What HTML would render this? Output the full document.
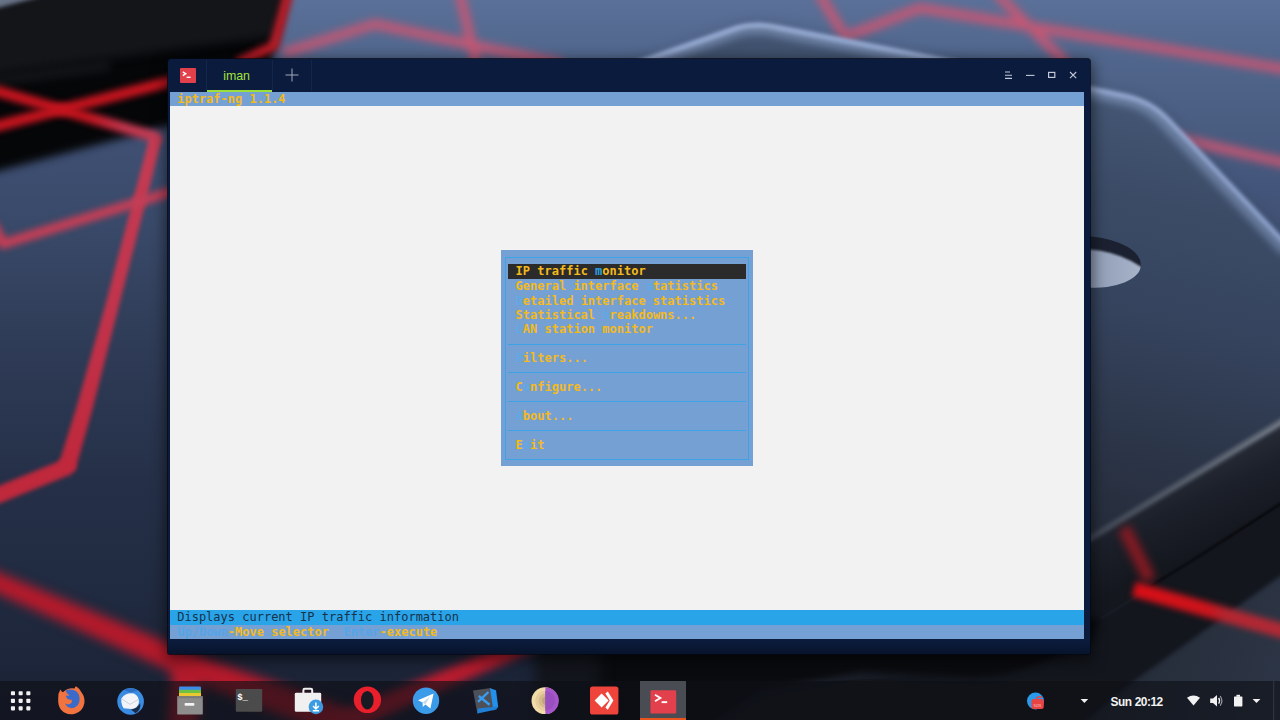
<!DOCTYPE html>
<html lang="en">
<head>
<meta charset="utf-8">
<title>iptraf-ng - Tilix</title>
<style>
*{box-sizing:border-box;margin:0;padding:0}
html,body{width:1280px;height:720px;overflow:hidden;background:#3c4a64}
body{position:relative;font-family:"Liberation Sans","DejaVu Sans",sans-serif}
#bg{position:absolute;left:0;top:0;width:1280px;height:720px;display:block}
/* ---------- window ---------- */
#win{position:absolute;left:168px;top:59px;width:922px;height:595px;background:#0a1b3d;border-radius:3px 3px 2px 2px;
 box-shadow:0 0 0 1px rgba(4,8,20,.75),0 4px 14px 3px rgba(0,0,0,.5)}
#winbot{position:absolute;left:0;right:0;bottom:0;height:15px;background:linear-gradient(#0b1c3e,#08142c);border-radius:0 0 2px 2px}
#titlebar{position:absolute;left:0;top:0;width:922px;height:33px}
.tsep{position:absolute;top:1px;width:1px;height:31px;background:#13274d}
#appicon{position:absolute;left:12px;top:9px;width:16px;height:15px;background:#e2414c;border-radius:1px}
#tab{position:absolute;left:39px;top:0;width:65px;height:33px;color:#a4e23c;font-size:12.4px;line-height:34px;text-align:center;padding-right:6px;letter-spacing:-.1px}
#tabline{position:absolute;left:39px;top:31px;width:65px;height:2px;background:#9be03a}
#term{position:absolute;left:2px;top:33px;width:914px;height:547px;background:#f2f2f2;overflow:hidden;
 font-family:"DejaVu Sans Mono","Liberation Mono",monospace;font-size:12px;font-weight:bold;line-height:14.4px;color:#f4ba1c}
.row{position:absolute;left:0;width:914px;height:14.4px;white-space:pre}
.k{color:#62a8e4}
#menu{position:absolute;left:331.2px;top:158.4px;width:252px;height:216px;background:#74a0d4}
#menu:before{content:"";position:absolute;left:3.6px;top:6.6px;right:4px;bottom:6.6px;border:1px solid #3ea2e6}
.mi{left:345.6px;width:230px}
.sep{position:absolute;left:338px;width:238px;height:1px;background:#3ea2e6}
.k2{color:#2e9fe4}
.k3{color:#55a5e8}
/* ---------- taskbar ---------- */
#dock{position:absolute;left:0;top:681px;width:1280px;height:39px;background:rgba(14,16,22,.63)}
.ico{position:absolute;top:4px;width:32px;height:32px}
#active{position:absolute;left:640px;top:0;width:46px;height:39px;background:#4a4c53;border-bottom:2px solid #e9541e}
#clock{position:absolute;left:1110.5px;top:1.5px;height:39px;line-height:39px;color:#f2f2f2;font-weight:bold;font-size:11.9px;letter-spacing:-.52px;word-spacing:.6px}
</style>
</head>
<body>
<svg id="bg" viewBox="0 0 1280 720" width="1280" height="720">
<!--BG-->
<defs>
  <linearGradient id="gTable" x1="0" y1="0" x2="0" y2="1">
    <stop offset="0" stop-color="#5a7098"/>
    <stop offset="0.08" stop-color="#51668c"/>
    <stop offset="0.167" stop-color="#4a5e82"/>
    <stop offset="0.264" stop-color="#43557a"/>
    <stop offset="0.42" stop-color="#394864"/>
    <stop offset="0.75" stop-color="#2a3448"/>
    <stop offset="1" stop-color="#1e2430"/>
  </linearGradient>
  <linearGradient id="gLeft" gradientUnits="userSpaceOnUse" x1="0" y1="150" x2="0" y2="700">
    <stop offset="0" stop-color="#3e4f72"/>
    <stop offset="0.12" stop-color="#3a4a6a"/>
    <stop offset="0.35" stop-color="#2f3c57"/>
    <stop offset="0.6" stop-color="#253048"/>
    <stop offset="0.8" stop-color="#202a40"/>
    <stop offset="1" stop-color="#1b2336"/>
  </linearGradient>
  <linearGradient id="gSlab" gradientUnits="userSpaceOnUse" x1="1180" y1="26" x2="1060" y2="540">
    <stop offset="0" stop-color="#566a90"/>
    <stop offset="0.12" stop-color="#455876"/>
    <stop offset="0.34" stop-color="#3b4b66"/>
    <stop offset="0.55" stop-color="#35435d"/>
    <stop offset="0.78" stop-color="#2c3649"/>
    <stop offset="1" stop-color="#252b38"/>
  </linearGradient>
  <linearGradient id="gSide" gradientUnits="userSpaceOnUse" x1="1180" y1="470" x2="1215" y2="545">
    <stop offset="0" stop-color="#272c37"/>
    <stop offset="0.4" stop-color="#1c202a"/>
    <stop offset="1" stop-color="#14171e"/>
  </linearGradient>
  <linearGradient id="gFloor" gradientUnits="userSpaceOnUse" x1="1040" y1="650" x2="1280" y2="720">
    <stop offset="0" stop-color="#171a22"/>
    <stop offset="0.35" stop-color="#252c39"/>
    <stop offset="1" stop-color="#2d3646"/>
  </linearGradient>
  <linearGradient id="gRim2" gradientUnits="userSpaceOnUse" x1="1090" y1="0" x2="1280" y2="0">
    <stop offset="0" stop-color="#424a57"/>
    <stop offset="1" stop-color="#7a8290"/>
  </linearGradient>
  <linearGradient id="gRedF" gradientUnits="userSpaceOnUse" x1="1136" y1="0" x2="1280" y2="0">
    <stop offset="0" stop-color="#d80e16"/>
    <stop offset="0.5" stop-color="#cc141c"/>
    <stop offset="0.62" stop-color="#b42630"/>
    <stop offset="1" stop-color="#ae2a36"/>
  </linearGradient>
  <linearGradient id="gHole" x1="0" y1="0" x2="1" y2="0">
    <stop offset="0" stop-color="#7d8aa3"/>
    <stop offset="0.5" stop-color="#8f9cb5"/>
    <stop offset="1" stop-color="#a9b5ca"/>
  </linearGradient>
  <clipPath id="cHole"><ellipse cx="1089" cy="262" rx="52" ry="25.5" transform="rotate(4 1089 262)"/></clipPath>
  <filter id="b1" filterUnits="userSpaceOnUse" x="-60" y="-60" width="1400" height="840" color-interpolation-filters="sRGB"><feGaussianBlur stdDeviation="1.2"/></filter>
  <filter id="b2" filterUnits="userSpaceOnUse" x="-60" y="-60" width="1400" height="840" color-interpolation-filters="sRGB"><feGaussianBlur stdDeviation="2.2"/></filter>
  <filter id="b3" filterUnits="userSpaceOnUse" x="-60" y="-60" width="1400" height="840" color-interpolation-filters="sRGB"><feGaussianBlur stdDeviation="3"/></filter>
  <filter id="b4" filterUnits="userSpaceOnUse" x="-60" y="-60" width="1400" height="840" color-interpolation-filters="sRGB"><feGaussianBlur stdDeviation="4"/></filter>
  <filter id="b6" filterUnits="userSpaceOnUse" x="-60" y="-60" width="1400" height="840" color-interpolation-filters="sRGB"><feGaussianBlur stdDeviation="5.5"/></filter>
  <filter id="b7" filterUnits="userSpaceOnUse" x="-60" y="-60" width="1400" height="840" color-interpolation-filters="sRGB"><feGaussianBlur stdDeviation="7"/></filter>
  <filter id="b12" filterUnits="userSpaceOnUse" x="-60" y="-60" width="1400" height="840" color-interpolation-filters="sRGB"><feGaussianBlur stdDeviation="12"/></filter>
  <linearGradient id="gL1" gradientUnits="userSpaceOnUse" x1="0" y1="0" x2="160" y2="0">
    <stop offset="0" stop-color="#c4141e"/><stop offset="0.55" stop-color="#c4141e"/><stop offset="0.78" stop-color="#c43850"/><stop offset="1" stop-color="#c43c54"/>
  </linearGradient>
  <linearGradient id="gL3" gradientUnits="userSpaceOnUse" x1="0" y1="137" x2="0" y2="467">
    <stop offset="0" stop-color="#c43c54"/><stop offset="0.5" stop-color="#c2344c"/><stop offset="1" stop-color="#c0283c"/>
  </linearGradient>
  <linearGradient id="gRim1" gradientUnits="userSpaceOnUse" x1="0" y1="25" x2="0" y2="250">
    <stop offset="0" stop-color="#b6caf4"/><stop offset="0.4" stop-color="#a8bce8"/><stop offset="1" stop-color="#a0b6e4"/>
  </linearGradient>
</defs>
<rect width="1280" height="720" fill="url(#gTable)"/>
<!-- red lines on the table (top) -->
<g fill="none" stroke="#cc5672" stroke-width="9.5" stroke-linecap="round" stroke-linejoin="round" filter="url(#b4)" opacity=".92">
  <path d="M287 52 L375 24 L560 64"/>
  <path d="M460 -5 L476 62"/>
  <path d="M820 -5 L845 37 L920 8 L1290 70"/>
  <path d="M998 -5 L1065 62"/>
  <path d="M1150 132 L1290 164"/>
</g>
<path d="M480 600 L1290 450 L1290 730 L480 730 Z" fill="url(#gFloor)"/>
<!-- big slab : shadow + top face + rim -->
<path d="M560 92 L650 58 L738 27 Q756 22 778 27 L935 58 L1090 88 L1128 96 Q1150 101 1166 117 L1290 248 L1290 416 L1090 537 L700 700 L400 600 Z" fill="#2c3850" opacity=".55" filter="url(#b7)"/>
<path d="M560 92 L650 58 L738 27 Q756 22 778 27 L935 58 L1090 88 L1128 96 Q1150 101 1166 117 L1290 248 L1290 416 L1090 537 L700 700 L400 600 Z" fill="url(#gSlab)"/>
<path d="M630 66 L738 28 Q756 23 778 28 L935 59 L1090 89 L1128 97 Q1150 102 1166 118 L1290 249" fill="none" stroke="url(#gRim1)" stroke-width="4" filter="url(#b2)"/>
<path d="M630 70 L738 32 Q756 27 778 32 L935 63 L1090 93 L1128 101 Q1148 106 1162 121 L1286 252" fill="none" stroke="#8fa4cc" stroke-width="8" filter="url(#b4)" opacity=".7"/>
<!-- floor, slab side, shadow band -->
<path d="M1290 498 L1197 558 L1100 618 L480 640 L480 740 L1062 740 L1134 681 L1290 569 Z" fill="#13161d" filter="url(#b2)"/>
<path d="M1290 414 L1090 537 L700 645 L480 640 L480 700 L1000 672 L1100 618 L1290 500 Z" fill="url(#gSide)"/>
<path d="M540 636 L1100 618 L1092 641 L1043 662 Q1000 680 958 676 L860 672 L760 690 L700 730 L540 730 Z" fill="#0a0b0f" filter="url(#b3)"/>
<path d="M1290 498 L1197 558 L1150 587" fill="none" stroke="#050608" stroke-width="3" filter="url(#b1)" opacity=".8"/>
<path d="M1290 417 L1086 541" fill="none" stroke="url(#gRim2)" stroke-width="5.5" filter="url(#b2)"/>
<!-- hole -->
<g clip-path="url(#cHole)" filter="url(#b1)">
  <rect x="1030" y="230" width="120" height="64" fill="#1b2130"/>
  <path d="M1040 249 L1090 249.5 Q1120 252 1143 268 L1143 300 L1040 300Z" fill="url(#gHole)"/>
</g>
<!-- red on floor / side -->
<path d="M1134 589 L1290 633" fill="none" stroke="url(#gRedF)" stroke-width="15" filter="url(#b3)"/>
<path d="M1124 528 L1150 580" fill="none" stroke="#8e1a22" stroke-width="13" filter="url(#b4)" opacity=".9"/>
<!-- left surface -->
<path d="M-10 160 L300 70 L560 70 L560 730 L-10 730Z" fill="url(#gLeft)"/>
<path d="M535 640 L600 640 L600 740 L535 740Z" fill="#12151b" filter="url(#b7)"/>
<!-- black slab top-left -->
<path d="M-20 -20 L289 -20 L274 50 L262 100 L168 126 L-20 176Z" fill="#050608" filter="url(#b4)"/>
<path d="M-20 -20 L287 -20 L276 36 L-20 76Z" fill="#131519" filter="url(#b4)"/>
<path d="M-10 82 L110 66" stroke="#2a2d33" stroke-width="8" filter="url(#b4)" opacity=".45"/>
<path d="M-10 -6 L50 -6 L-10 10Z" fill="#6a7488" filter="url(#b2)"/>
<!-- red lines left -->
<g fill="none" stroke-linecap="round" stroke-linejoin="round">
  <path d="M288 -5 L274 46 L240 62" stroke="#b81a24" stroke-width="10" filter="url(#b3)"/>
  <path d="M-10 128 L180 79" stroke="#c4141e" stroke-width="11" filter="url(#b3)"/>
  <path d="M-10 89 L156 137" stroke="url(#gL1)" stroke-width="11" filter="url(#b3)"/>
  <path d="M150.4 135.6 L106.0 304.4 L76.8 407.9 L59.1 464.6 L74.9 469.4 L91.2 412.1 L118.0 307.6 L161.6 138.4Z" fill="url(#gL3)" stroke="url(#gL3)" stroke-width="1" filter="url(#b2)"/>
  <path d="M67 467 L-14 500" stroke="#c0283c" stroke-width="16.5" filter="url(#b2)"/>
  <path d="M-6 226 L3 244 L180 189" stroke="#c23e56" stroke-width="10" filter="url(#b3)"/>
  <path d="M188 664 L182 735" stroke="#b01c2e" stroke-width="30" filter="url(#b6)" stroke-linecap="butt"/>
  <path d="M-23.8 583.7 L195.1 682.0 L346.8 740.1 L357.2 711.9 L204.9 658.0 L-16.2 566.3Z" fill="#b41a2b" stroke="none" filter="url(#b6)"/>
  <path d="M340.1 735.7 L562.9 637.1 L557.1 623.3 L331.9 716.3Z" fill="#b81c2e" stroke="none" filter="url(#b4)"/>
</g>
<!--/BG-->
</svg>

<div id="win">
  <div id="titlebar">
    <div id="appicon"><svg width="16" height="14" viewBox="0 0 16 14"><path d="M2.8 3.8 L5.8 5.7 L2.8 7.6" fill="none" stroke="#fff" stroke-width="1.4"/><rect x="6.6" y="8.6" width="4" height="1.4" fill="#fff"/></svg></div>
    <div class="tsep" style="left:38px"></div>
    <div id="tab">iman</div>
    <div id="tabline"></div>
    <div class="tsep" style="left:104px"></div>
    <svg id="plus" width="16" height="16" viewBox="0 0 16 16" style="position:absolute;left:115.5px;top:8.4px"><path d="M8 1.5V14.5M1.5 8H14.5" stroke="#a2aabb" stroke-width="1" fill="none"/></svg>
    <div class="tsep" style="left:143px"></div>
    <svg width="90" height="20" viewBox="0 0 90 20" style="position:absolute;left:828px;top:6px">
      <g stroke="#c3c9d6" fill="none" stroke-width="1.1">
        <path d="M9 7H14M9 10.2H16M9 13.4H16" stroke-width="1.1"/>
        <path d="M30 10.4H38.5"/>
        <rect x="52.6" y="7.4" width="6.2" height="5" stroke-width="1.2"/>
        <path d="M74 7L80.2 13.2M80.2 7L74 13.2"/>
      </g>
    </svg>
  </div>
  <div id="term">
<div class="row" style="top:0;background:#74a0d4"> iptraf-ng 1.1.4</div>
<div id="menu"></div>
<div class="row" style="top:172.1px;left:338.4px;width:237.2px;height:14.6px;line-height:15.6px;background:#2b2b2b"> IP traffic <span class="k2">m</span>onitor</div>
<div class="row mi" style="top:187.2px">General interface <span class="k">s</span>tatistics</div>
<div class="row mi" style="top:201.6px"><span class="k">D</span>etailed interface statistics</div>
<div class="row mi" style="top:216px">Statistical <span class="k">b</span>reakdowns...</div>
<div class="row mi" style="top:230.4px"><span class="k">L</span>AN station monitor</div>
<div class="sep" style="top:251.5px"></div>
<div class="row mi" style="top:259.2px"><span class="k">F</span>ilters...</div>
<div class="sep" style="top:280.3px"></div>
<div class="row mi" style="top:288px">C<span class="k">o</span>nfigure...</div>
<div class="sep" style="top:309.1px"></div>
<div class="row mi" style="top:316.8px"><span class="k">A</span>bout...</div>
<div class="sep" style="top:337.9px"></div>
<div class="row mi" style="top:345.6px">E<span class="k">x</span>it</div>
<div class="row" style="top:518.4px;background:#2aa4e9;color:#17324a;font-weight:normal"> Displays current IP traffic information</div>
<div class="row" style="top:532.8px;background:#74a0d4;height:15px"> <span class="k3">Up/Down</span>-Move selector  <span class="k3">Enter</span>-execute</div>
  </div>
  <div id="winbot"></div>
</div>

<div id="dock">
<div id="active"></div>
<svg id="dockico" width="1280" height="39" viewBox="0 681 1280 39" style="position:absolute;left:0;top:0">
  <!-- app grid -->
  <g fill="#f1f1f1">
    <rect x="10.9" y="691.2" width="4.1" height="4.1" rx=".8"/><rect x="18.6" y="691.2" width="4.1" height="4.1" rx=".8"/><rect x="26.3" y="691.2" width="4.1" height="4.1" rx=".8"/>
    <rect x="10.9" y="698.8" width="4.1" height="4.1" rx=".8"/><rect x="18.6" y="698.8" width="4.1" height="4.1" rx=".8"/><rect x="26.3" y="698.8" width="4.1" height="4.1" rx=".8"/>
    <rect x="10.9" y="706.3" width="4.1" height="4.1" rx=".8"/><rect x="18.6" y="706.3" width="4.1" height="4.1" rx=".8"/><rect x="26.3" y="706.3" width="4.1" height="4.1" rx=".8"/>
  </g>
  <!-- firefox -->
  <g>
    <path d="M58.2 698.6 Q57.6 693.8 60.4 689.4 Q61.4 691.6 63 692.2 Q68 687.4 74.6 688.6 Q74.8 687 76 686.2 Q79.8 688.6 81.6 692.4 Q85.2 697 84.4 703 Q83 711.2 75 713.8 Q66.4 716 60.8 709.6 Q57.8 705.2 58.2 698.6Z" fill="#f07340"/>
    <path d="M65.6 690.6 Q71.4 687.8 76.6 691.6 Q80.8 696 79.2 702.2 Q77 707.8 71.4 708.2 Q66.6 707.6 65.2 703.6 Q68.2 705.2 70.8 703.6 Q72.6 702 71.6 699.6 Q69.6 700.2 67.6 699 Q65.6 697.6 65.8 695.2 Q67.4 696.2 69.4 695.4 Q66.2 694 65.6 690.6Z" fill="#3b6bc9"/>
  </g>
  <!-- thunderbird -->
  <g>
    <circle cx="130.6" cy="701.4" r="13.3" fill="#3a8be2"/>
    <path d="M124 690 Q130 686.5 138 690.5 L131 692.5Z" fill="#2f6fc4"/>
    <path d="M121.4 698.4 Q126 692.2 134 693.6 Q139.6 696.4 138.8 703 Q137.4 708.4 131.6 709 L123.6 708.2 Q120.6 703.4 121.4 698.4Z" fill="#f2f4f8"/>
    <path d="M122 699 L130 704.4 L138.4 699.4" fill="none" stroke="#c9d3e4" stroke-width="1"/>
    <path d="M131 709.4 Q137.6 708.6 140.2 703 Q141.4 709.6 135.6 713.2Z" fill="#1d2a44"/>
  </g>
  <!-- files -->
  <g>
    <rect x="179" y="686.4" width="22" height="4" rx="1" fill="#3c8ce8"/>
    <rect x="179" y="689.8" width="22" height="3.6" fill="#6cc043"/>
    <rect x="179" y="693" width="22" height="3.6" fill="#e9c832"/>
    <rect x="177.2" y="696.2" width="25.6" height="18.4" rx="1.2" fill="#8d8d8d"/>
    <rect x="177.2" y="696.2" width="25.6" height="2" fill="#7a7a7a"/>
    <rect x="184.6" y="703" width="9.8" height="2.8" rx=".8" fill="#f4f4f4"/>
  </g>
  <!-- terminal -->
  <g>
    <rect x="235.8" y="688.9" width="26.4" height="22.8" rx="1" fill="#4b4b4b"/>
    <text x="237.2" y="699.6" font-family="Liberation Mono, DejaVu Sans Mono, monospace" font-size="9" font-weight="bold" fill="#fff">$_</text>
  </g>
  <!-- software -->
  <g>
    <path d="M303.4 693 V690.2 Q303.4 688.8 304.8 688.8 H310.8 Q312.2 688.8 312.2 690.2 V693" fill="none" stroke="#f0f0f0" stroke-width="2"/>
    <rect x="294.8" y="692.8" width="26.4" height="19" rx="1.4" fill="#f0f0f0"/>
    <circle cx="315.9" cy="706.9" r="7.3" fill="#3a9be2"/>
    <path d="M315.9 702.4 V708.4 M313 706 L315.9 709 L318.8 706 M312.8 710.8 H319" fill="none" stroke="#fff" stroke-width="1.5"/>
  </g>
  <!-- opera -->
  <g>
    <ellipse cx="367.4" cy="699.8" rx="13.7" ry="13.2" fill="#e91f2c"/>
    <ellipse cx="367.3" cy="700.2" rx="6.3" ry="9.3" fill="#171a22"/>
  </g>
  <!-- telegram -->
  <g>
    <circle cx="426" cy="700.7" r="13.2" fill="#3b9be9"/>
    <path d="M418 700.2 L433.6 693.4 L430.4 708.6 L425.4 704.6 L422.8 707 L422.6 702.6Z" fill="#fff"/>
    <path d="M422.6 702.6 L430 696.6 L425.4 704.6Z" fill="#c8daea"/>
  </g>
  <!-- vscode -->
  <g>
    <path d="M473 690.4 L491 688 L497.6 707.2 L477.4 713.4Z" fill="#4d5058"/>
    <path d="M490 688.2 L496 690.2 L498.2 707 L493.4 710.4Z" fill="#2590ea"/>
    <path d="M477.6 708.6 L497.8 706.4 L496.4 709.6 L477.4 713.4Z" fill="#1f7fd6"/>
    <path d="M478 701.8 L488.4 692 M478.8 696 L489.6 704.8" fill="none" stroke="#3a9cf0" stroke-width="2.4"/>
  </g>
  <!-- tor-like -->
  <g>
    <circle cx="544.9" cy="700.7" r="13.4" fill="#f3dcaa"/>
    <circle cx="545.4" cy="700.7" r="10.2" fill="#e6cd9b"/>
    <circle cx="545.8" cy="700.7" r="7.2" fill="#d5ba8b"/>
    <circle cx="546.2" cy="700.7" r="4.2" fill="#bfa47c"/>
    <path d="M545.4 687.3 A13.4 13.4 0 0 1 545.4 714.1Z" fill="#a556c8"/>
    <path d="M545.4 691 A9.7 9.7 0 0 1 545.4 710.4Z" fill="#9a4fc0"/>
  </g>
  <!-- anydesk -->
  <g>
    <rect x="590" y="686.6" width="28.4" height="28" rx="2.6" fill="#ef443b"/>
    <path d="M594.6 700.6 L601.6 693.6 L608.6 700.6 L601.6 707.6Z" fill="#fff"/>
    <path d="M606.6 693.6 L609 691.4 L614.6 700.6 L609 709.8 L606.6 707.6 L611 700.6Z" fill="#fff" transform="translate(-1.2 0) scale(1 1)"/>
  </g>
  <!-- tilix active -->
  <g>
    <rect x="650.4" y="690.2" width="25.8" height="23.4" rx="1.2" fill="#e2404c"/>
    <path d="M655 694.8 L660.4 698 L655 701.2" fill="none" stroke="#fff" stroke-width="1.8"/>
    <rect x="661.6" y="701.2" width="5.6" height="1.9" fill="#fff"/>
  </g>
  <!-- tray -->
  <g>
    <circle cx="1035.5" cy="700.9" r="8.5" fill="#2b9be9"/>
    <rect x="1031.4" y="699" width="12.4" height="10" rx="2.2" fill="#e94444"/>
    <path d="M1036 698.4 Q1039 695.6 1042 697.4" fill="none" stroke="#e94444" stroke-width="1.4"/>
    <text x="1033.4" y="706.8" font-family="Liberation Sans, sans-serif" font-size="5" fill="#f6b0b0">sos</text>
  </g>
  <path d="M1080.6 699 H1088.2 L1084.4 703Z" fill="#f2f2f2"/>
  <!-- wifi -->
  <path d="M1193.5 705.6 L1187 697.8 Q1193.5 693 1200 697.8Z" fill="#f2f2f2"/>
  <!-- volume -->
  <path d="M1210.2 698.6 H1213 L1217 695 V706.6 L1213 703 H1210.2Z" fill="#f2f2f2"/>
  <path d="M1218.6 698 Q1220.6 700.8 1218.6 703.6" fill="none" stroke="#f2f2f2" stroke-width="1.3"/>
  <path d="M1220.2 696 Q1223.6 700.8 1220.2 705.6" fill="none" stroke="#9a9ca4" stroke-width="1.2"/>
  <!-- battery -->
  <rect x="1234" y="696.4" width="8.4" height="10" rx=".6" fill="#f2f2f2"/>
  <rect x="1236.4" y="694.8" width="3.6" height="2" fill="#f2f2f2"/>
  <path d="M1252.6 699 H1260.4 L1256.5 703Z" fill="#f2f2f2"/>
  <rect x="1273.2" y="681" width="1" height="39" fill="#353944"/>
</svg>
<div id="clock">Sun 20:12</div>
</div>
</body>
</html>
